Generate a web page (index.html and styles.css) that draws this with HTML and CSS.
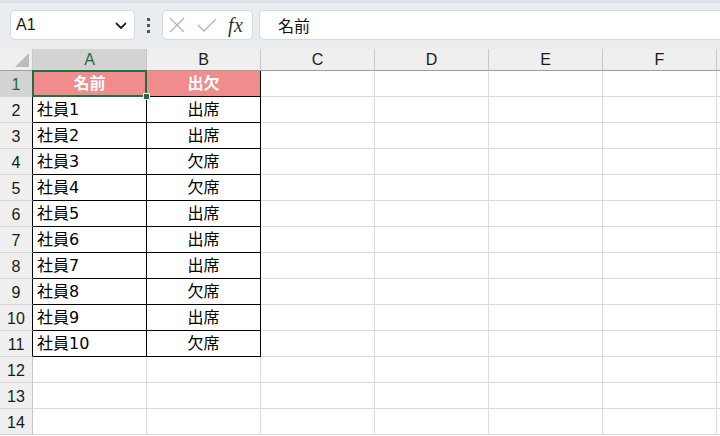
FILE: index.html
```html
<!DOCTYPE html>
<html lang="ja">
<head>
<meta charset="utf-8">
<link rel="stylesheet" href="styles.css">
</head>
<body>
<div class="app">
  <div class="topbar">
    <div class="namebox">
      <span class="ref">A1</span>
      <svg class="chev" width="12" height="8" viewBox="0 0 12 8"><path d="M1.5 1.5 L6 6 L10.5 1.5" fill="none" stroke="#222" stroke-width="1.8" stroke-linecap="round" stroke-linejoin="round"/></svg>
    </div>
    <div class="dots"><i></i><i></i><i></i></div>
    <div class="fxgroup">
      <svg width="16" height="16" viewBox="0 0 16 16"><path d="M1 1 L15 15 M15 1 L1 15" stroke="#b4b4b4" stroke-width="1.3" fill="none"/></svg>
      <svg width="20" height="14" viewBox="0 0 20 14"><path d="M1 7 L7 13 L19 1" stroke="#b4b4b4" stroke-width="1.3" fill="none"/></svg>
      <span class="fx">fx</span>
    </div>
    <div class="formula">名前</div>
  </div>
  <div class="sheet">
    <div class="corner"><span class="tri"></span></div>
    <div class="ch sel">A</div>
    <div class="ch">B</div>
    <div class="ch">C</div>
    <div class="ch">D</div>
    <div class="ch">E</div>
    <div class="ch">F</div>
    <div class="ch rest"></div>

    <div class="rh sel tb">1</div>
    <div class="c t hd a1">名前<span class="handle"></span></div>
    <div class="c t hd">出欠</div>
    <div class="c"></div><div class="c"></div><div class="c"></div><div class="c"></div><div class="c rest"></div>

    <div class="rh tb">2</div><div class="c t">社員1</div><div class="c t ctr">出席</div>
    <div class="c"></div><div class="c"></div><div class="c"></div><div class="c"></div><div class="c rest"></div>

    <div class="rh tb">3</div><div class="c t">社員2</div><div class="c t ctr">出席</div>
    <div class="c"></div><div class="c"></div><div class="c"></div><div class="c"></div><div class="c rest"></div>

    <div class="rh tb">4</div><div class="c t">社員3</div><div class="c t ctr">欠席</div>
    <div class="c"></div><div class="c"></div><div class="c"></div><div class="c"></div><div class="c rest"></div>

    <div class="rh tb">5</div><div class="c t">社員4</div><div class="c t ctr">欠席</div>
    <div class="c"></div><div class="c"></div><div class="c"></div><div class="c"></div><div class="c rest"></div>

    <div class="rh tb">6</div><div class="c t">社員5</div><div class="c t ctr">出席</div>
    <div class="c"></div><div class="c"></div><div class="c"></div><div class="c"></div><div class="c rest"></div>

    <div class="rh tb">7</div><div class="c t">社員6</div><div class="c t ctr">出席</div>
    <div class="c"></div><div class="c"></div><div class="c"></div><div class="c"></div><div class="c rest"></div>

    <div class="rh tb">8</div><div class="c t">社員7</div><div class="c t ctr">出席</div>
    <div class="c"></div><div class="c"></div><div class="c"></div><div class="c"></div><div class="c rest"></div>

    <div class="rh tb">9</div><div class="c t">社員8</div><div class="c t ctr">欠席</div>
    <div class="c"></div><div class="c"></div><div class="c"></div><div class="c"></div><div class="c rest"></div>

    <div class="rh tb">10</div><div class="c t">社員9</div><div class="c t ctr">出席</div>
    <div class="c"></div><div class="c"></div><div class="c"></div><div class="c"></div><div class="c rest"></div>

    <div class="rh tb">11</div><div class="c t">社員10</div><div class="c t ctr">欠席</div>
    <div class="c"></div><div class="c"></div><div class="c"></div><div class="c"></div><div class="c rest"></div>

    <div class="rh">12</div><div class="c"></div><div class="c"></div>
    <div class="c"></div><div class="c"></div><div class="c"></div><div class="c"></div><div class="c rest"></div>

    <div class="rh">13</div><div class="c"></div><div class="c"></div>
    <div class="c"></div><div class="c"></div><div class="c"></div><div class="c"></div><div class="c rest"></div>

    <div class="rh">14</div><div class="c"></div><div class="c"></div>
    <div class="c"></div><div class="c"></div><div class="c"></div><div class="c"></div><div class="c rest"></div>
  </div>
</div>
</body>
</html>
```

FILE: styles.css
```css
* { box-sizing: border-box; }
html, body { margin: 0; padding: 0; }
body {
  width: 720px;
  height: 436px;
  overflow: hidden;
  background: #ffffff;
  font-family: "Liberation Sans", "Noto Sans CJK JP", sans-serif;
  color: #000;
}
.app { width: 720px; height: 436px; overflow: hidden; }

.topbar {
  height: 49px;
  background: #eaedf0;
  border-top: 3px solid #dcdfe3;
  padding: 7px 0 0 10px;
  display: flex;
  align-items: flex-start;
  white-space: nowrap;
}
.namebox {
  width: 125px;
  height: 30px;
  background: #fff;
  border: 1px solid #d6d8db;
  border-radius: 5px;
  display: flex;
  align-items: center;
  justify-content: space-between;
  padding: 0 7px 0 5px;
  flex: none;
}
.ref { font-size: 16px; color: #1a1a1a; }
.chev { margin-top: 1px; }
.dots {
  width: 27px;
  height: 30px;
  display: flex;
  flex-direction: column;
  align-items: center;
  justify-content: center;
  gap: 3px;
  flex: none;
}
.dots i { display: block; width: 3px; height: 3px; background: #555; }
.fxgroup {
  width: 91px;
  height: 30px;
  background: #fff;
  border: 1px solid #d6d8db;
  border-radius: 5px;
  display: flex;
  align-items: center;
  padding: 0 0 0 6px;
  gap: 12px;
  flex: none;
}
.fx {
  font-family: "Liberation Serif", "DejaVu Serif", serif;
  font-style: italic;
  font-size: 20px;
  color: #333;
  margin-left: -1px;
  letter-spacing: 0.5px;
}
.formula {
  margin-left: 6px;
  height: 30px;
  flex: 1;
  background: #fff;
  border: 1px solid #d6d8db;
  border-right: none;
  border-radius: 5px 0 0 5px;
  font-family: "Noto Sans CJK JP", sans-serif;
  font-size: 16px;
  line-height: 28px;
  padding-left: 18px;
  color: #111;
}

.sheet {
  display: grid;
  grid-template-columns: 33px 114px 114px 114px 114px 114px 114px 3px;
  grid-template-rows: 22px repeat(14, 26px);
}
.corner {
  background: #efefef;
  border-right: 1px solid #c8c8c8;
  border-bottom: 1px solid #9e9e9e;
  position: relative;
}
.tri {
  position: absolute;
  right: 3px;
  bottom: 3px;
  width: 0;
  height: 0;
  border-left: 14px solid transparent;
  border-bottom: 14px solid #bcbcbc;
}
.ch {
  background: #efefef;
  border-right: 1px solid #c8c8c8;
  border-bottom: 1px solid #9e9e9e;
  font-size: 16px;
  color: #1a1a1a;
  text-align: center;
  line-height: 21px;
}
.ch.sel { background: #d3d3d3; color: #1b6a3f; }
.ch.rest { border-right: none; }
.rh {
  background: #efefef;
  border-right: 1px solid #c8c8c8;
  border-bottom: 1px solid #d6d6d6;
  font-size: 16px;
  color: #1a1a1a;
  text-align: center;
  line-height: 28px;
}
.rh.tb { border-right-color: #000; }
.rh.sel { background: #d3d3d3; color: #1b6a3f; }
.c {
  border-right: 1px solid #dcdcdc;
  border-bottom: 1px solid #dcdcdc;
  font-family: "DejaVu Sans", "Noto Sans CJK JP", sans-serif;
  font-size: 16px;
  line-height: 25px;
  padding-left: 4px;
  white-space: nowrap;
}
.c.rest { border-right: none; }
.c.t { border-right-color: #000; border-bottom-color: #000; }
.c.ctr { text-align: center; padding-left: 0; }
.c.hd {
  background: #f08c8c;
  color: #fff;
  font-weight: bold;
  text-align: center;
  padding-left: 0;
}
.a1 { position: relative; }
.a1::after {
  content: "";
  position: absolute;
  left: -1px;
  top: -1px;
  right: -1px;
  bottom: -1px;
  border: 2px solid #1f7145;
  pointer-events: none;
}
.handle {
  position: absolute;
  right: -4px;
  bottom: -4px;
  width: 7px;
  height: 7px;
  background: #1f7145;
  border: 1px solid #fff;
  z-index: 2;
}
```
